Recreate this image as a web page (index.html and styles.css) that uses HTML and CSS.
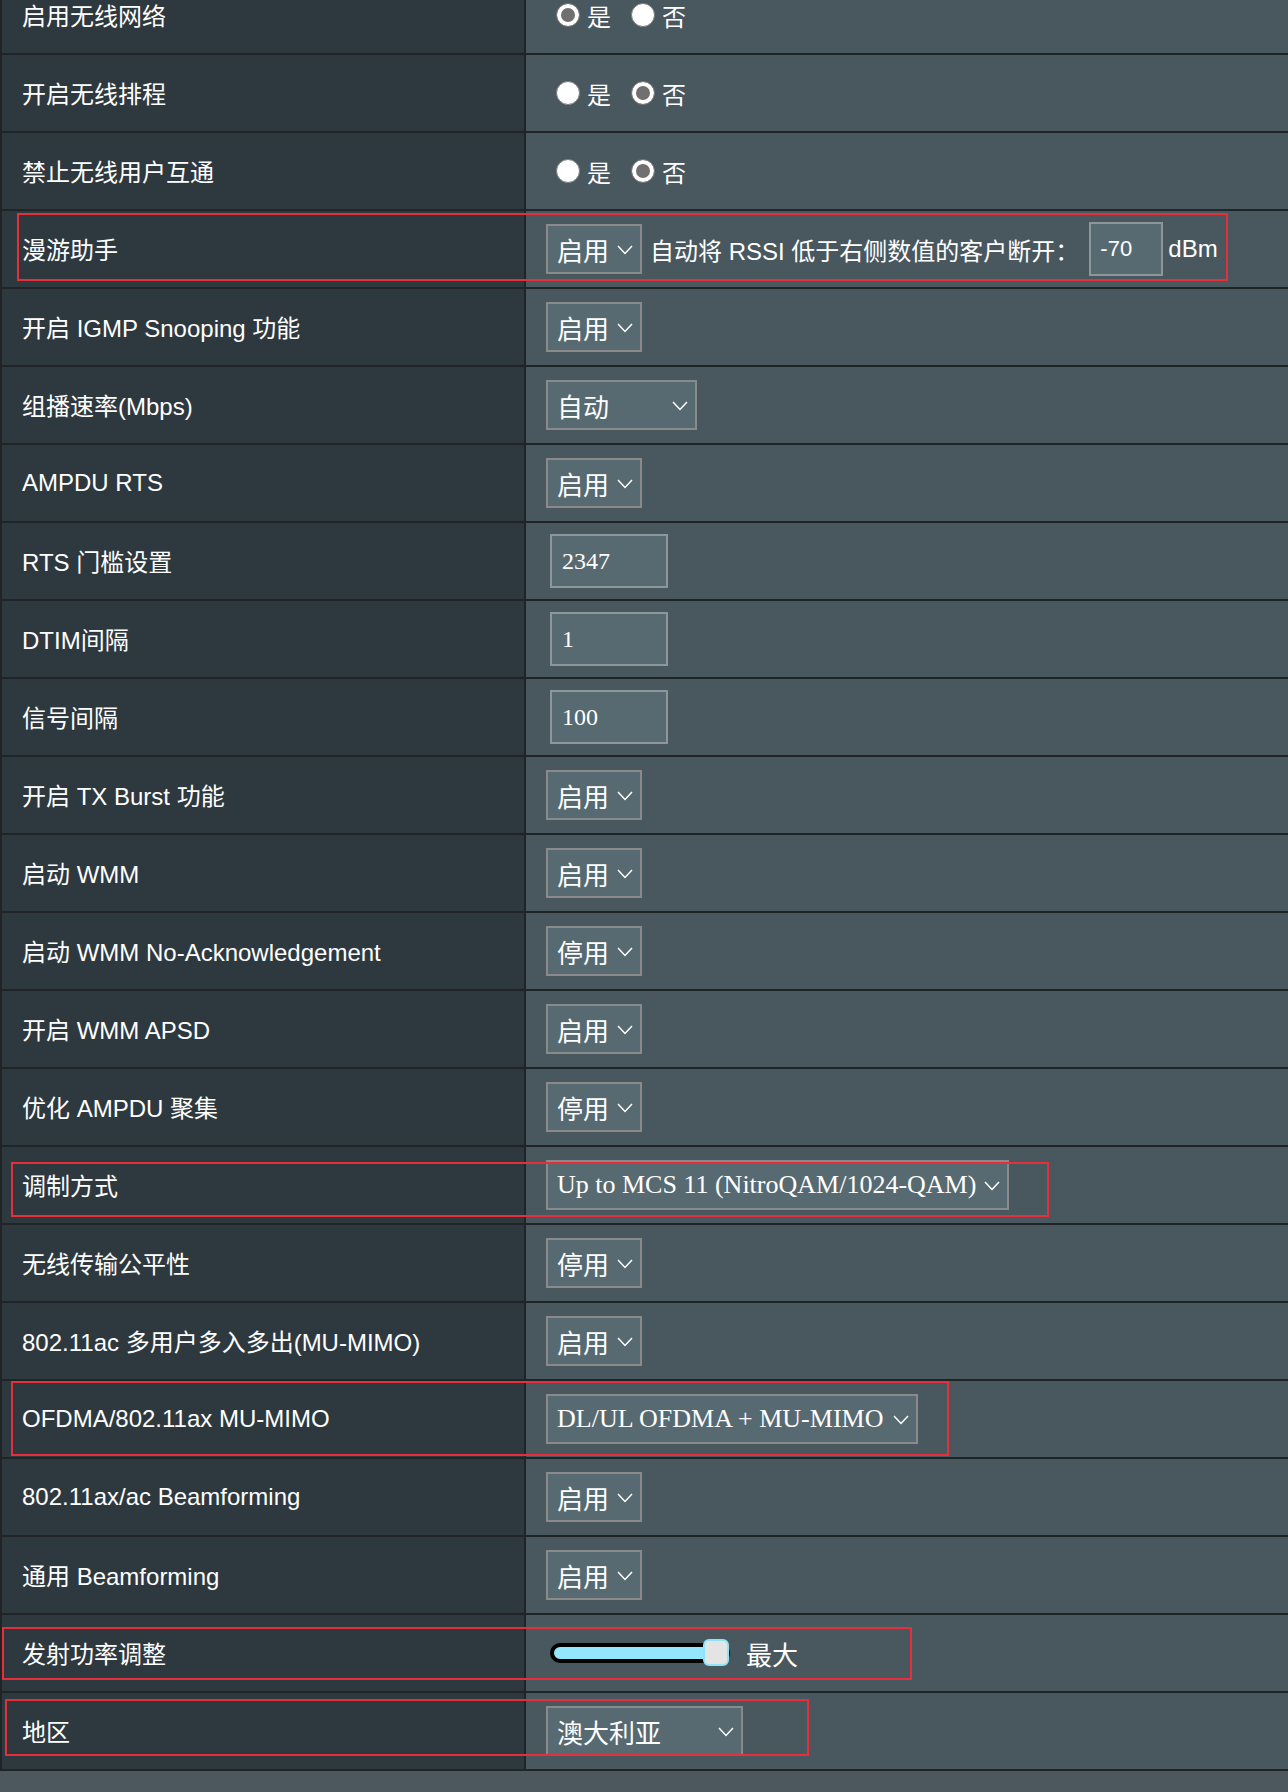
FILE: index.html
```html
<!DOCTYPE html>
<html lang="zh-CN">

<head>
    <meta charset="UTF-8">
    <meta name="viewport" content="width=device-width, initial-scale=1.0">
    <title>无线 - 专业设置</title>

    <link rel="stylesheet" href="styles.css">
</head>

<body>

    <div class="settings">

        <div class="row">
            <div class="row-label">启用无线网络</div>
            <div class="row-field">
                <label class="radio"><input type="radio" name="wl_radio" checked>是</label>
                <label class="radio"><input type="radio" name="wl_radio">否</label>
            </div>
        </div>

        <div class="row">
            <div class="row-label">开启无线排程</div>
            <div class="row-field">
                <label class="radio"><input type="radio" name="wl_timesched">是</label>
                <label class="radio"><input type="radio" name="wl_timesched" checked>否</label>
            </div>
        </div>

        <div class="row">
            <div class="row-label">禁止无线用户互通</div>
            <div class="row-field">
                <label class="radio"><input type="radio" name="wl_ap_isolate">是</label>
                <label class="radio"><input type="radio" name="wl_ap_isolate" checked>否</label>
            </div>
        </div>

        <div class="row">
            <div class="row-label">漫游助手</div>
            <div class="row-field">
                <div class="select">
                    <span>启用</span>
                    <svg class="chevron" viewBox="0 0 16 10"><polyline points="1,1 8,8.5 15,1" /></svg>
                </div>
                <span class="hint">自动将 RSSI 低于右侧数值的客户断开：</span>
                <input class="rssi-input" type="text" value="-70">
                <span class="unit">dBm</span>
            </div>
        </div>

        <div class="row">
            <div class="row-label">开启 IGMP Snooping 功能</div>
            <div class="row-field">
                <div class="select">
                    <span>启用</span>
                    <svg class="chevron" viewBox="0 0 16 10"><polyline points="1,1 8,8.5 15,1" /></svg>
                </div>
            </div>
        </div>

        <div class="row">
            <div class="row-label">组播速率(Mbps)</div>
            <div class="row-field">
                <div class="select select-rate">
                    <span>自动</span>
                    <svg class="chevron" viewBox="0 0 16 10"><polyline points="1,1 8,8.5 15,1" /></svg>
                </div>
            </div>
        </div>

        <div class="row">
            <div class="row-label">AMPDU RTS</div>
            <div class="row-field">
                <div class="select">
                    <span>启用</span>
                    <svg class="chevron" viewBox="0 0 16 10"><polyline points="1,1 8,8.5 15,1" /></svg>
                </div>
            </div>
        </div>

        <div class="row">
            <div class="row-label">RTS 门槛设置</div>
            <div class="row-field">
                <input class="text-input" type="text" value="2347">
            </div>
        </div>

        <div class="row">
            <div class="row-label">DTIM间隔</div>
            <div class="row-field">
                <input class="text-input" type="text" value="1">
            </div>
        </div>

        <div class="row">
            <div class="row-label">信号间隔</div>
            <div class="row-field">
                <input class="text-input" type="text" value="100">
            </div>
        </div>

        <div class="row">
            <div class="row-label">开启 TX Burst 功能</div>
            <div class="row-field">
                <div class="select">
                    <span>启用</span>
                    <svg class="chevron" viewBox="0 0 16 10"><polyline points="1,1 8,8.5 15,1" /></svg>
                </div>
            </div>
        </div>

        <div class="row">
            <div class="row-label">启动 WMM</div>
            <div class="row-field">
                <div class="select">
                    <span>启用</span>
                    <svg class="chevron" viewBox="0 0 16 10"><polyline points="1,1 8,8.5 15,1" /></svg>
                </div>
            </div>
        </div>

        <div class="row">
            <div class="row-label">启动 WMM No-Acknowledgement</div>
            <div class="row-field">
                <div class="select">
                    <span>停用</span>
                    <svg class="chevron" viewBox="0 0 16 10"><polyline points="1,1 8,8.5 15,1" /></svg>
                </div>
            </div>
        </div>

        <div class="row">
            <div class="row-label">开启 WMM APSD</div>
            <div class="row-field">
                <div class="select">
                    <span>启用</span>
                    <svg class="chevron" viewBox="0 0 16 10"><polyline points="1,1 8,8.5 15,1" /></svg>
                </div>
            </div>
        </div>

        <div class="row">
            <div class="row-label">优化 AMPDU 聚集</div>
            <div class="row-field">
                <div class="select">
                    <span>停用</span>
                    <svg class="chevron" viewBox="0 0 16 10"><polyline points="1,1 8,8.5 15,1" /></svg>
                </div>
            </div>
        </div>

        <div class="row">
            <div class="row-label">调制方式</div>
            <div class="row-field">
                <div class="select select-mcs">
                    <span>Up to MCS 11 (NitroQAM/1024-QAM)</span>
                    <svg class="chevron" viewBox="0 0 16 10"><polyline points="1,1 8,8.5 15,1" /></svg>
                </div>
            </div>
        </div>

        <div class="row">
            <div class="row-label">无线传输公平性</div>
            <div class="row-field">
                <div class="select">
                    <span>停用</span>
                    <svg class="chevron" viewBox="0 0 16 10"><polyline points="1,1 8,8.5 15,1" /></svg>
                </div>
            </div>
        </div>

        <div class="row">
            <div class="row-label">802.11ac 多用户多入多出(MU-MIMO)</div>
            <div class="row-field">
                <div class="select">
                    <span>启用</span>
                    <svg class="chevron" viewBox="0 0 16 10"><polyline points="1,1 8,8.5 15,1" /></svg>
                </div>
            </div>
        </div>

        <div class="row">
            <div class="row-label">OFDMA/802.11ax MU-MIMO</div>
            <div class="row-field">
                <div class="select select-ofdma">
                    <span>DL/UL OFDMA + MU-MIMO</span>
                    <svg class="chevron" viewBox="0 0 16 10"><polyline points="1,1 8,8.5 15,1" /></svg>
                </div>
            </div>
        </div>

        <div class="row">
            <div class="row-label">802.11ax/ac Beamforming</div>
            <div class="row-field">
                <div class="select">
                    <span>启用</span>
                    <svg class="chevron" viewBox="0 0 16 10"><polyline points="1,1 8,8.5 15,1" /></svg>
                </div>
            </div>
        </div>

        <div class="row">
            <div class="row-label">通用 Beamforming</div>
            <div class="row-field">
                <div class="select">
                    <span>启用</span>
                    <svg class="chevron" viewBox="0 0 16 10"><polyline points="1,1 8,8.5 15,1" /></svg>
                </div>
            </div>
        </div>

        <div class="row">
            <div class="row-label">发射功率调整</div>
            <div class="row-field">
                <div class="slider">
                    <div class="slider-thumb"></div>
                </div>
                <span class="power-text">最大</span>
            </div>
        </div>

        <div class="row">
            <div class="row-label">地区</div>
            <div class="row-field">
                <div class="select select-region">
                    <span>澳大利亚</span>
                    <svg class="chevron" viewBox="0 0 16 10"><polyline points="1,1 8,8.5 15,1" /></svg>
                </div>
            </div>
        </div>

    </div>

    <!-- red frames around the settings that were changed -->
    <div class="mark mark-roam"></div>
    <div class="mark mark-mcs"></div>
    <div class="mark mark-ofdma"></div>
    <div class="mark mark-power"></div>
    <div class="mark mark-region"></div>

</body>

</html>
```

FILE: styles.css
```css
* {
    font-family: 'Liberation Sans', 'Noto Sans CJK SC', sans-serif;
}

html,
body {
    margin: 0;
    padding: 0;
    height: 100%;
}

body {
    position: relative;
    background-color: #4d585e;
    color: #fff;
    overflow: hidden;
}

.settings {
    margin-top: -23px;
    border-left: 2px solid #212426;
}

.row {
    display: flex;
    height: 76px;
    border-bottom: 2px solid #212426;
}

.row-label {
    box-sizing: border-box;
    width: 524px;
    padding-left: 20px;
    padding-bottom: 1px;
    display: flex;
    align-items: center;
    background-color: #2e393f;
    border-right: 2px solid #212426;
    font-size: 24px;
}

.row-field {
    flex: 1;
    display: flex;
    align-items: center;
    padding-left: 20px;
    background-color: #49585f;
    font-size: 24px;
}

/* radio buttons */
.radio {
    display: flex;
    align-items: center;
    margin-right: 10px;
}

.radio input {
    -webkit-appearance: none;
    appearance: none;
    box-sizing: border-box;
    width: 24px;
    height: 24px;
    margin: 0 7px 0 10px;
    border-radius: 50%;
    border: 1px solid #7b7b7b;
    background-color: #fff;
}

.radio input:checked {
    background-color: #707070;
    box-shadow: inset 0 0 0 4px #fff;
}

/* drop-downs */
.select {
    box-sizing: border-box;
    width: 96px;
    height: 50px;
    padding: 0 7px 0 9px;
    display: flex;
    align-items: center;
    justify-content: space-between;
    background-color: #586a71;
    border: 2px solid #8a8a8a;
}

.select span {
    font-family: 'Liberation Serif', 'Noto Sans CJK SC', serif;
    font-size: 26px;
    white-space: nowrap;
}

.chevron {
    width: 16px;
    height: 10px;
    margin-top: 2px;
    flex-shrink: 0;
}

.chevron polyline {
    fill: none;
    stroke: #fff;
    stroke-width: 1.5;
}

.select-rate {
    width: 151px;
}

.select-mcs {
    width: 463px;
}

.select-ofdma {
    width: 372px;
}

.select-region {
    width: 197px;
}

/* text fields */
.text-input,
.rssi-input {
    box-sizing: border-box;
    height: 54px;
    background-color: #586a71;
    border: 2px solid #8d979b;
    color: #fff;
    outline: none;
}

.text-input {
    width: 118px;
    margin-left: 4px;
    padding-left: 10px;
    font-family: 'Liberation Serif', serif;
    font-size: 24px;
}

.rssi-input {
    width: 74px;
    margin-left: 10px;
    padding-left: 9px;
    font-size: 22px;
}

.hint {
    margin-left: 8px;
}

.unit {
    margin-left: 5px;
}

/* transmit power */
.slider {
    position: relative;
    box-sizing: border-box;
    width: 180px;
    height: 20px;
    margin-left: 4px;
    border: 4px solid #000;
    border-radius: 10px;
    background-color: #93e6fb;
}

.slider-thumb {
    position: absolute;
    right: -3px;
    top: -8px;
    box-sizing: border-box;
    width: 26px;
    height: 27px;
    border: 2px solid #8fe2f7;
    border-radius: 6px;
    background-color: #e4e4e4;
}

.power-text {
    margin-left: 16px;
    font-size: 26px;
}

/* highlight frames */
.mark {
    position: absolute;
    box-sizing: border-box;
    border: 2px solid #e5303c;
}

.mark-roam {
    left: 17px;
    top: 213px;
    width: 1211px;
    height: 68px;
}

.mark-mcs {
    left: 11px;
    top: 1162px;
    width: 1038px;
    height: 55px;
}

.mark-ofdma {
    left: 11px;
    top: 1381px;
    width: 938px;
    height: 75px;
}

.mark-power {
    left: 2px;
    top: 1627px;
    width: 910px;
    height: 53px;
}

.mark-region {
    left: 5px;
    top: 1699px;
    width: 804px;
    height: 57px;
}
```
